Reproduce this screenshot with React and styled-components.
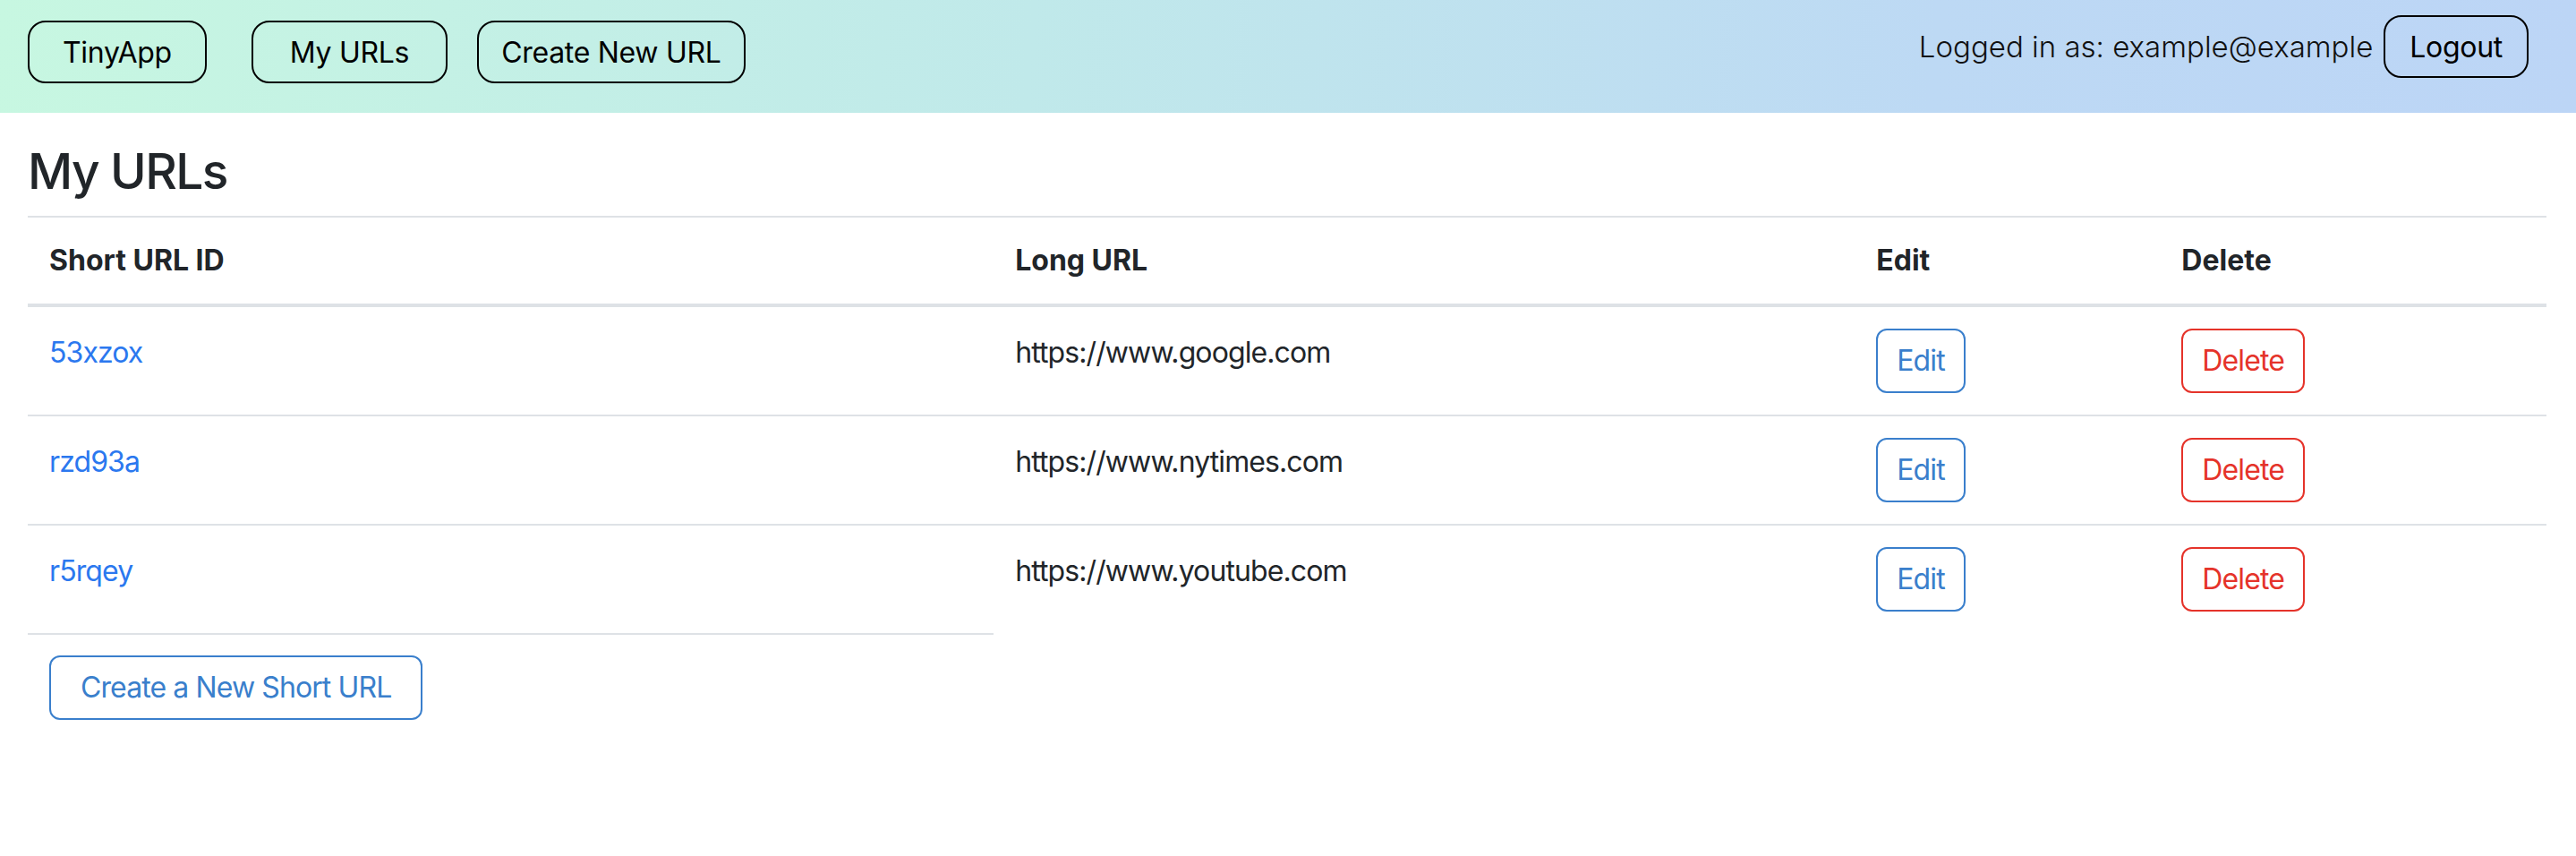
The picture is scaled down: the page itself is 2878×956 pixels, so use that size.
import styled, { createGlobalStyle } from "styled-components";

const urls = [
	{ id: "53xzox", longURL: "https://www.google.com" },
	{ id: "rzd93a", longURL: "https://www.nytimes.com" },
	{ id: "r5rqey", longURL: "https://www.youtube.com" },
];

function App() {
	return (
		<>
			<GlobalStyle />
			<Nav>
				<NavGroup $top={23}>
					<NavButton $pad={37}>TinyApp</NavButton>
					<NavButton $pad={41} $gap={50}>My URLs</NavButton>
					<NavButton $pad={25} $gap={33}>Create New URL</NavButton>
				</NavGroup>
				<NavGroup $top={17}>
					<LoggedIn>Logged in as: example@example</LoggedIn>
					<NavButton $pad={27} $gap={12}>Logout</NavButton>
				</NavGroup>
			</Nav>
			<Main>
				<Title>My URLs</Title>
				<Table>
					<colgroup>
						<col style={{ width: "38.35%" }} />
						<col style={{ width: "34.19%" }} />
						<col style={{ width: "12.12%" }} />
						<col style={{ width: "15.34%" }} />
					</colgroup>
					<thead>
						<tr>
							<Th>Short URL ID</Th>
							<Th>Long URL</Th>
							<Th>Edit</Th>
							<Th>Delete</Th>
						</tr>
					</thead>
					<tbody>
						{urls.map((url, i) => {
							const last = i === urls.length - 1;
							return (
								<tr key={url.id}>
									<TextCell>
										<ShortLink href="#">{url.id}</ShortLink>
									</TextCell>
									<TextCell $noBorder={last}>{url.longURL}</TextCell>
									<Td $noBorder={last}>
										<OutlineButton $color="#3a7fcc">Edit</OutlineButton>
									</Td>
									<Td $noBorder={last}>
										<OutlineButton $color="#e5332a">Delete</OutlineButton>
									</Td>
								</tr>
							);
						})}
					</tbody>
				</Table>
				<CreateButton $color="#3a7fcc">Create a New Short URL</CreateButton>
			</Main>
		</>
	);
}

const GlobalStyle = createGlobalStyle`
	body {
		margin: 0;
		background: #fff;
		color: #212529;
		font-family: Inter, "Liberation Sans", sans-serif;
	}
`;

const Nav = styled.nav`
	height: 126px;
	box-sizing: border-box;
	display: flex;
	justify-content: space-between;
	align-items: flex-start;
	padding: 0 53px 0 31px;
	background: linear-gradient(95deg, #c7f7e1 0%, #c0e9ea 40%, #bdd9f4 75%, #bcd5f6 100%);
`;

const NavGroup = styled.div`
	display: flex;
	align-items: center;
	margin-top: ${(p) => p.$top}px;
`;

const NavButton = styled.button`
	height: 70px;
	box-sizing: border-box;
	margin-left: ${(p) => p.$gap || 0}px;
	padding: 0 ${(p) => p.$pad}px;
	border: 2px solid #000;
	border-radius: 20px;
	background: transparent;
	color: #000;
	font-family: Inter, "Liberation Sans", sans-serif;
	font-size: 32px;
	font-weight: 400;
	letter-spacing: -0.3px;
	cursor: pointer;
`;

const LoggedIn = styled.span`
	font-size: 33px;
	font-weight: 300;
	color: #111;
`;

const Main = styled.main`
	padding: 32px 33px 0 31px;
`;

const Title = styled.h3`
	margin: 0 0 16px;
	font-size: 55px;
	font-weight: 500;
	line-height: 67px;
	letter-spacing: -1.6px;
`;

const Table = styled.table`
	width: 100%;
	border-collapse: collapse;
	border-top: 2px solid #dee2e6;
	font-size: 32px;
	line-height: 48px;
`;

const Th = styled.th`
	padding: 24px;
	text-align: left;
	font-weight: 700;
	border-bottom: 4px solid #dee2e6;
`;

const Td = styled.td`
	padding: 24px;
	vertical-align: top;
	letter-spacing: -0.9px;
	border-bottom: 2px solid ${(p) => (p.$noBorder ? "transparent" : "#dee2e6")};
`;

const TextCell = styled(Td)`
	padding: 27px 24px 21px;
`;

const ShortLink = styled.a`
	color: #2b78ef;
	text-decoration: none;
`;

const OutlineButton = styled.button`
	display: block;
	height: 72px;
	box-sizing: border-box;
	padding: 0 21px;
	border: 2px solid ${(p) => p.$color};
	border-radius: 12px;
	background: #fff;
	color: ${(p) => p.$color};
	font-family: Inter, "Liberation Sans", sans-serif;
	font-size: 32px;
	line-height: 48px;
	letter-spacing: -0.9px;
	cursor: pointer;
`;

const CreateButton = styled(OutlineButton)`
	margin: 23px 0 0 24px;
	padding: 0 33px;
`;

export default App;
